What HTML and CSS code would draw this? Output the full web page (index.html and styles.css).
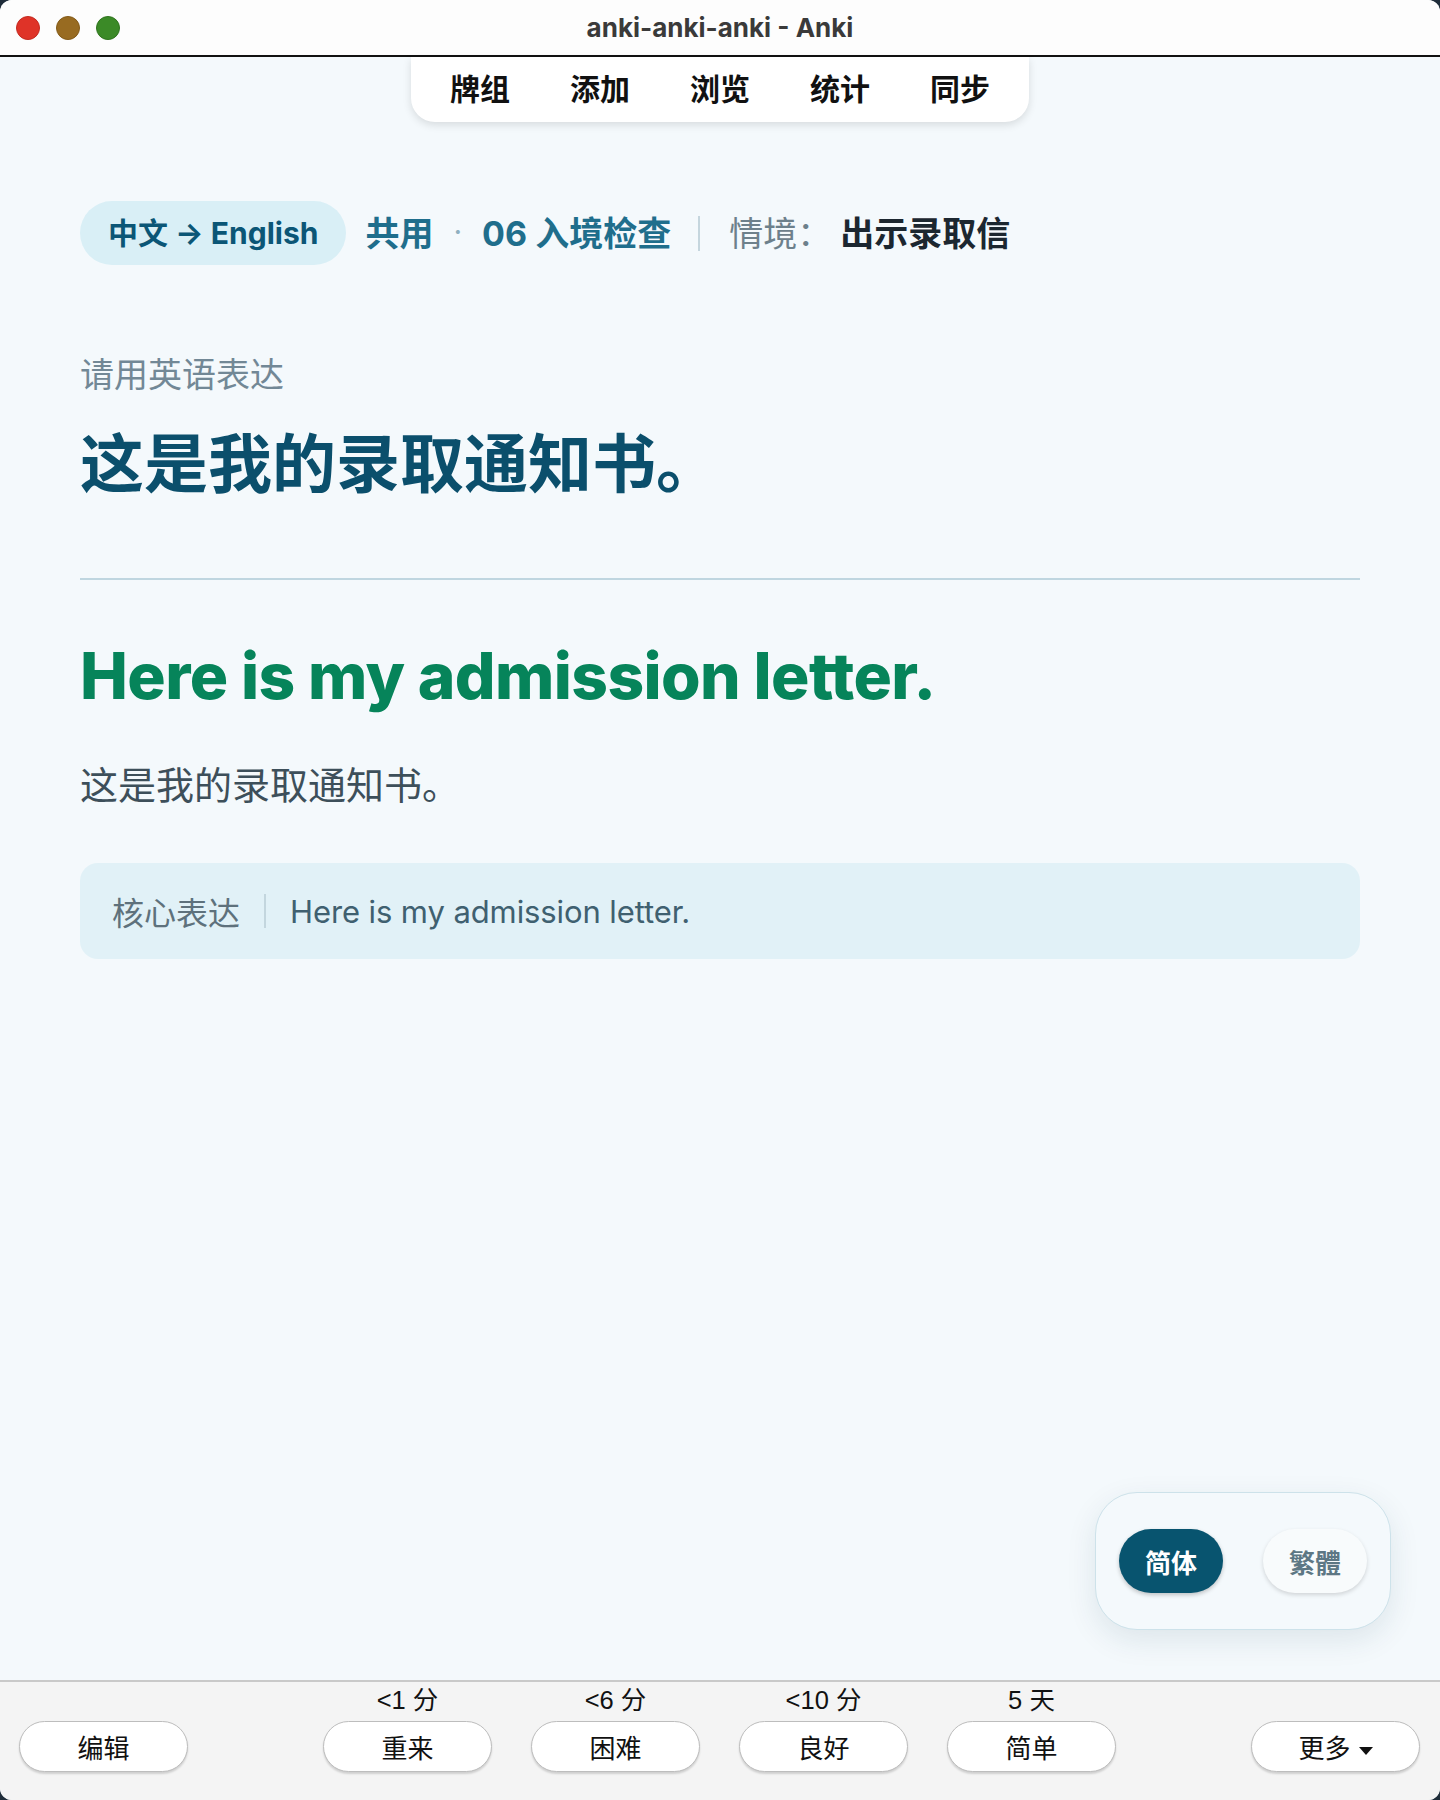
FILE: index.html
```html
<!DOCTYPE html>
<html lang="zh-CN">
<head>
<meta charset="UTF-8">
<title>anki-anki-anki - Anki</title>
<link rel="stylesheet" href="styles.css">
</head>
<body>
<div class="window">

  <header class="titlebar">
    <div class="lights">
      <span class="light close"></span>
      <span class="light minimize"></span>
      <span class="light zoom"></span>
    </div>
    <div class="title">anki-anki-anki - Anki</div>
    <div></div>
  </header>

  <main class="webview">
    <nav class="toolbar">
      <a>牌组</a>
      <a>添加</a>
      <a>浏览</a>
      <a>统计</a>
      <a>同步</a>
    </nav>

    <section class="card">
      <div class="crumbs">
        <span class="direction">中文 → English</span>
        <span class="crumb deck">共用</span>
        <span class="dot">·</span>
        <span class="crumb">06 入境检查</span>
        <span class="sep"></span>
        <span class="scene-label">情境：</span>
        <span class="scene">出示录取信</span>
      </div>

      <div class="prompt">请用英语表达</div>
      <h1 class="question">这是我的录取通知书。</h1>

      <hr class="divider">

      <h2 class="answer">Here is my admission letter.</h2>
      <p class="gloss">这是我的录取通知书。</p>

      <div class="core">
        <span class="core-label">核心表达</span>
        <span class="core-sep"></span>
        <span class="core-text">Here is my admission letter.</span>
      </div>
    </section>

    <!-- simplified / traditional switch -->
    <div class="script-toggle">
      <button class="on">简体</button>
      <button>繁體</button>
    </div>
  </main>

  <footer class="reviewbar">
    <button class="btn">编辑</button>
    <div class="answers">
      <div class="ease"><span>&lt;1 分</span><button class="btn">重来</button></div>
      <div class="ease"><span>&lt;6 分</span><button class="btn">困难</button></div>
      <div class="ease"><span>&lt;10 分</span><button class="btn">良好</button></div>
      <div class="ease"><span>5 天</span><button class="btn">简单</button></div>
    </div>
    <button class="btn">更多<span class="caret"></span></button>
  </footer>

</div>
</body>
</html>
```

FILE: styles.css
```css
* {
    box-sizing: border-box;
}

html, body {
    margin: 0;
}

body {
    background: #1f2d3a;
    font-family: Inter, "Noto Sans CJK SC", sans-serif;
}

.window {
    width: 1440px;
    height: 1800px;
    border-radius: 12px;
    overflow: hidden;
    display: flex;
    flex-direction: column;
    background: #f4f9fc;
}

/* title bar */

.titlebar {
    flex: none;
    height: 57px;
    display: grid;
    grid-template-columns: 1fr auto 1fr;
    align-items: center;
    background: #fdfdfd;
    border-bottom: 2px solid #111;
}

.lights {
    display: flex;
    gap: 16px;
    padding-left: 16px;
}

.light {
    width: 24px;
    height: 24px;
    border-radius: 50%;
}

.close {
    background: #df3328;
    border: 1px solid #c42a20;
}

.minimize {
    background: #986b21;
    border: 1px solid #835a18;
}

.zoom {
    background: #3b8a27;
    border: 1px solid #2f741e;
}

.title {
    font-family: Inter, sans-serif;
    font-weight: 700;
    font-size: 26px;
    color: #3a3a3a;
}

/* web view */

.webview {
    flex: 1;
    position: relative;
    background: #f4f9fc;
}

.toolbar {
    width: 618px;
    height: 65px;
    margin: 0 auto;
    display: flex;
    justify-content: center;
    gap: 60px;
    background: #fff;
    border-radius: 0 0 24px 24px;
    box-shadow: 0 3px 8px rgba(0, 0, 0, 0.12);
}

.toolbar a {
    font-size: 30px;
    font-weight: 700;
    line-height: 65px;
    color: #111;
}

.card {
    padding: 79px 80px 0;
}

.crumbs {
    display: flex;
    align-items: center;
    height: 64px;
}

.crumbs span {
    padding-bottom: 4px;
}

.crumbs .direction {
    display: flex;
    align-items: center;
    height: 64px;
    padding: 0 28px 4px;
    border-radius: 32px;
    background: #d9eff6;
    color: #0b5676;
    font-size: 30px;
    font-weight: 700;
}

.crumb {
    font-size: 34px;
    font-weight: 700;
    color: #1f6e8c;
}

.deck {
    margin-left: 19px;
}

.dot {
    margin: 0 20px;
    font-size: 30px;
    color: #8fb0bf;
}

.crumbs .sep {
    width: 2px;
    height: 35px;
    padding: 0;
    margin: 0 29px 0 27px;
    background: #c5d6de;
}

.scene-label {
    margin-right: 9px;
    font-size: 34px;
    color: #6d808b;
}

.scene {
    font-size: 34px;
    font-weight: 700;
    color: #1c2730;
}

.prompt {
    margin-top: 90px;
    font-size: 34px;
    line-height: 40px;
    color: #728896;
}

.question {
    margin: 31px 0 0;
    font-size: 64px;
    line-height: 76px;
    font-weight: 700;
    color: #0b4f6c;
}

.divider {
    margin: 76px 0 0;
    border: 0;
    height: 2px;
    background: #bfd6e0;
}

.answer {
    margin: 59px 0 0;
    font-size: 64px;
    line-height: 74px;
    font-weight: 800;
    letter-spacing: -0.6px;
    color: #06845a;
}

.gloss {
    margin: 49px 0 0;
    font-size: 38px;
    line-height: 46px;
    color: #3d4f5a;
}

.core {
    display: flex;
    align-items: center;
    height: 96px;
    margin-top: 55px;
    padding: 0 32px;
    border-radius: 18px;
    background: #e1f1f7;
}

.core-label {
    font-size: 32px;
    color: #5e717c;
}

.core-sep {
    width: 2px;
    height: 34px;
    margin: 0 24px;
    background: #c3d6de;
}

.core-text {
    font-size: 31px;
    letter-spacing: -0.1px;
    color: #3f6070;
}

/* floating script switch */

.script-toggle {
    position: absolute;
    right: 49px;
    bottom: 50px;
    display: flex;
    gap: 40px;
    padding: 36px 23px;
    border: 1px solid #cde2ea;
    border-radius: 42px;
    background: #f4f9fc;
    box-shadow: 0 10px 30px rgba(20, 60, 80, 0.10);
}

.script-toggle button {
    width: 104px;
    height: 64px;
    border: 0;
    border-radius: 32px;
    font-family: Inter, "Noto Sans CJK SC", sans-serif;
    font-size: 26px;
    font-weight: 700;
    background: #f8fbfc;
    color: #5d7784;
    box-shadow: 0 2px 4px rgba(0, 0, 0, 0.15);
}

.script-toggle .on {
    background: #08546f;
    color: #fff;
    box-shadow: 0 2px 4px rgba(0, 0, 0, 0.22);
}

/* review bar */

.reviewbar {
    flex: none;
    height: 120px;
    display: flex;
    justify-content: space-between;
    align-items: flex-end;
    padding: 0 20px 28px 19px;
    border-top: 2px solid #c9c9c9;
    background: #f4f4f4;
    font-family: "Liberation Sans", "Noto Sans CJK SC", sans-serif;
}

.answers {
    display: flex;
    gap: 39px;
}

.ease {
    display: flex;
    flex-direction: column;
    align-items: center;
}

.ease span {
    font-size: 25.5px;
    line-height: 28px;
    margin-bottom: 7px;
    color: #111;
}

.btn {
    width: 169px;
    height: 51px;
    border: 1px solid #bdbdbd;
    border-radius: 26px;
    background: #fff;
    box-shadow: 0 2px 2px rgba(0, 0, 0, 0.15);
    font-family: "Liberation Sans", "Noto Sans CJK SC", sans-serif;
    font-size: 26px;
    color: #111;
}

.caret {
    display: inline-block;
    margin-left: 8px;
    vertical-align: middle;
    border-left: 7px solid transparent;
    border-right: 7px solid transparent;
    border-top: 8px solid #111;
}
```
